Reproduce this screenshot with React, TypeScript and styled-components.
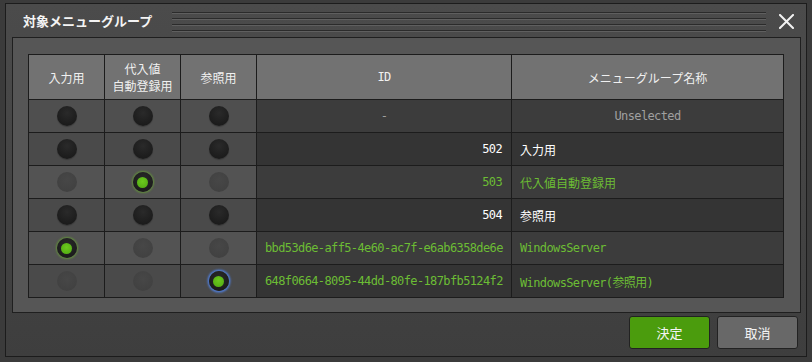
import React from "react";
import styled, { createGlobalStyle, css } from "styled-components";

const Global = createGlobalStyle`
  html, body { margin: 0; padding: 0; }
  body {
    background: #3b3b3b;
    font-family: "Noto Sans CJK JP", "Noto Sans", sans-serif;
    width: 812px;
    height: 362px;
    overflow: hidden;
  }
`;

const Page = styled.div`
  padding: 3px 0 0 5px;
`;

const Dialog = styled.div`
  width: 800px;
  height: 352px;
  border: 1px solid #1c1c1c;
  background: linear-gradient(#4b4b4b, #3e3e3e);
  display: flex;
  flex-direction: column;
`;

const TitleBar = styled.div`
  height: 33px;
  display: flex;
  align-items: center;
  padding: 0 12px 0 17px;
`;

const Title = styled.div`
  color: #f4f4f4;
  font-size: 13px;
  font-weight: 700;
  white-space: nowrap;
  margin-right: 20px;
`;

const Stripes = styled.div`
  flex: 1;
  height: 20px;
  margin-top: 2px;
  background: repeating-linear-gradient(
    to bottom,
    #2b2b2b 0 1px,
    #5f5f5f 1px 2px,
    transparent 2px 6px
  );
  margin-right: 13px;
`;

const CloseButton = styled.button`
  width: 15px;
  height: 15px;
  padding: 0;
  border: 0;
  background: none;
  display: flex;
  margin-top: 2px;
`;

const Panel = styled.div`
  margin: 0 5px 0 6px;
  height: 276px;
  border: 1px solid #1f1f1f;
  background: #565656;
  padding: 16px 16px 0 15px;
  box-sizing: border-box;
`;

const Table = styled.table`
  border-collapse: collapse;
  table-layout: fixed;
  width: 756px;
  & td, & th {
    border: 1px solid #1c1c1c;
    padding: 0;
  }
`;

const HeadCell = styled.th<{ $w: number }>`
  width: ${(p) => p.$w}px;
  height: 44px;
  background: #727272;
  color: #f0f0f0;
  font-weight: 400;
  font-size: 12px;
  line-height: 17px;
  text-align: center;
`;

const Mono = css`
  font-family: "DejaVu Sans Mono", "Noto Sans CJK JP", monospace;
  font-size: 12px;
  letter-spacing: -0.62px;
`;

const HeadMono = styled(HeadCell)`
  ${Mono};
`;

const RadioCell = styled.td<{ $shade: number }>`
  height: 32px;
  background: ${(p) => ["#4f4f4f", "#4a4a4a", "#535353"][p.$shade]};
  text-align: center;
  vertical-align: middle;
  line-height: 0;
`;

type Tone = "muted" | "white" | "green";
const toneColor: Record<Tone, string> = {
  muted: "#a0a0a0",
  white: "#ffffff",
  green: "#6cbd34",
};

const DataCell = styled.td<{ $dark: boolean; $tone: Tone; $align: "left" | "right" | "center"; $mono?: boolean }>`
  height: 32px;
  background: ${(p) => (p.$dark ? "#343434" : "#3c3c3c")};
  color: ${(p) => toneColor[p.$tone]};
  text-align: ${(p) => p.$align};
  padding: ${(p) => (p.$align === "right" ? "0 9px 0 0" : p.$align === "left" ? "0 0 0 8px" : "0")} !important;
  font-size: 12px;
  ${(p) => p.$mono && Mono};
  white-space: nowrap;
  vertical-align: middle;
`;

type RState = "off" | "disabled" | "on" | "focus";

const Radio = styled.span<{ $state: RState }>`
  display: inline-flex;
  align-items: center;
  justify-content: center;
  width: 20px;
  height: 20px;
  border-radius: 50%;
  vertical-align: middle;
  ${(p) =>
    p.$state === "disabled"
      ? css`
          background: radial-gradient(circle at 50% 40%, #474747, #414141 75%);
        `
      : css`
          background: radial-gradient(circle at 50% 35%, #2a2a2a, #1b1b1b 75%);
          box-shadow: 0 1px 1px rgba(0, 0, 0, 0.25);
        `}
  ${(p) =>
    p.$state === "on" &&
    css`
      box-shadow: 0 0 2px 1px rgba(110, 190, 40, 0.55);
    `}
  ${(p) =>
    p.$state === "focus" &&
    css`
      box-shadow: 0 0 2px 1.5px rgba(80, 130, 230, 0.85);
    `}
  &::after {
    content: "";
    display: ${(p) => (p.$state === "on" || p.$state === "focus" ? "block" : "none")};
    width: 11px;
    height: 11px;
    border-radius: 50%;
    background: radial-gradient(circle at 50% 40%, #6cc91e, #4ea711);
  }
`;

const Footer = styled.div`
  flex: 1;
  display: flex;
  justify-content: flex-end;
  align-items: flex-start;
  padding: 3px 8px 0 0;
  gap: 7px;
`;

const Button = styled.button<{ $primary?: boolean }>`
  width: 81px;
  height: 33px;
  border-radius: 3px;
  border: 1px solid #222;
  background: ${(p) => (p.$primary ? "#4b9c0d" : "#686868")};
  color: #f4f4f4;
  font-family: "Noto Sans CJK JP", sans-serif;
  font-size: 13px;
  padding: 0;
`;

type Row = {
  radios: [RState, RState, RState];
  id: string;
  name: string;
  tone: Tone;
  center?: boolean;
  nameMono?: boolean;
  shade: number;
};

const rows: Row[] = [
  { radios: ["off", "off", "off"], id: "-", name: "Unselected", tone: "muted", center: true, nameMono: true, shade: 0 },
  { radios: ["off", "off", "off"], id: "502", name: "入力用", tone: "white", shade: 1 },
  { radios: ["disabled", "on", "disabled"], id: "503", name: "代入値自動登録用", tone: "green", shade: 2 },
  { radios: ["off", "off", "off"], id: "504", name: "参照用", tone: "white", shade: 1 },
  { radios: ["on", "disabled", "disabled"], id: "bbd53d6e-aff5-4e60-ac7f-e6ab6358de6e", name: "WindowsServer", tone: "green", nameMono: true, shade: 2 },
  { radios: ["disabled", "disabled", "focus"], id: "648f0664-8095-44dd-80fe-187bfb5124f2", name: "WindowsServer(参照用)", tone: "green", nameMono: true, shade: 1 },
];

export default function App() {
  return (
    <>
      <Global />
      <Page>
        <Dialog>
          <TitleBar>
            <Title>対象メニューグループ</Title>
            <Stripes />
            <CloseButton aria-label="close">
              <svg width="15" height="15" viewBox="0 0 15 15">
                <path d="M1 1 L14 14 M14 1 L1 14" stroke="#f2f2f2" strokeWidth="2" strokeLinecap="square" />
              </svg>
            </CloseButton>
          </TitleBar>
          <Panel>
            <Table>
              <thead>
                <tr>
                  <HeadCell $w={75}>入力用</HeadCell>
                  <HeadCell $w={75}>
                    代入値
                    <br />
                    自動登録用
                  </HeadCell>
                  <HeadCell $w={75}>参照用</HeadCell>
                  <HeadMono $w={254}>ID</HeadMono>
                  <HeadCell $w={271}>メニューグループ名称</HeadCell>
                </tr>
              </thead>
              <tbody>
                {rows.map((r, i) => (
                  <tr key={i}>
                    {r.radios.map((s, j) => (
                      <RadioCell key={j} $shade={r.shade}>
                        <Radio $state={s} />
                      </RadioCell>
                    ))}
                    <DataCell $dark={i % 2 === 1} $tone={r.tone} $align={r.center ? "center" : i >= 4 ? "left" : "right"} $mono>
                      {r.id}
                    </DataCell>
                    <DataCell $dark={i % 2 === 1} $tone={r.tone} $align={r.center ? "center" : "left"} $mono={r.nameMono}>
                      {r.name}
                    </DataCell>
                  </tr>
                ))}
              </tbody>
            </Table>
          </Panel>
          <Footer>
            <Button $primary>決定</Button>
            <Button>取消</Button>
          </Footer>
        </Dialog>
      </Page>
    </>
  );
}
